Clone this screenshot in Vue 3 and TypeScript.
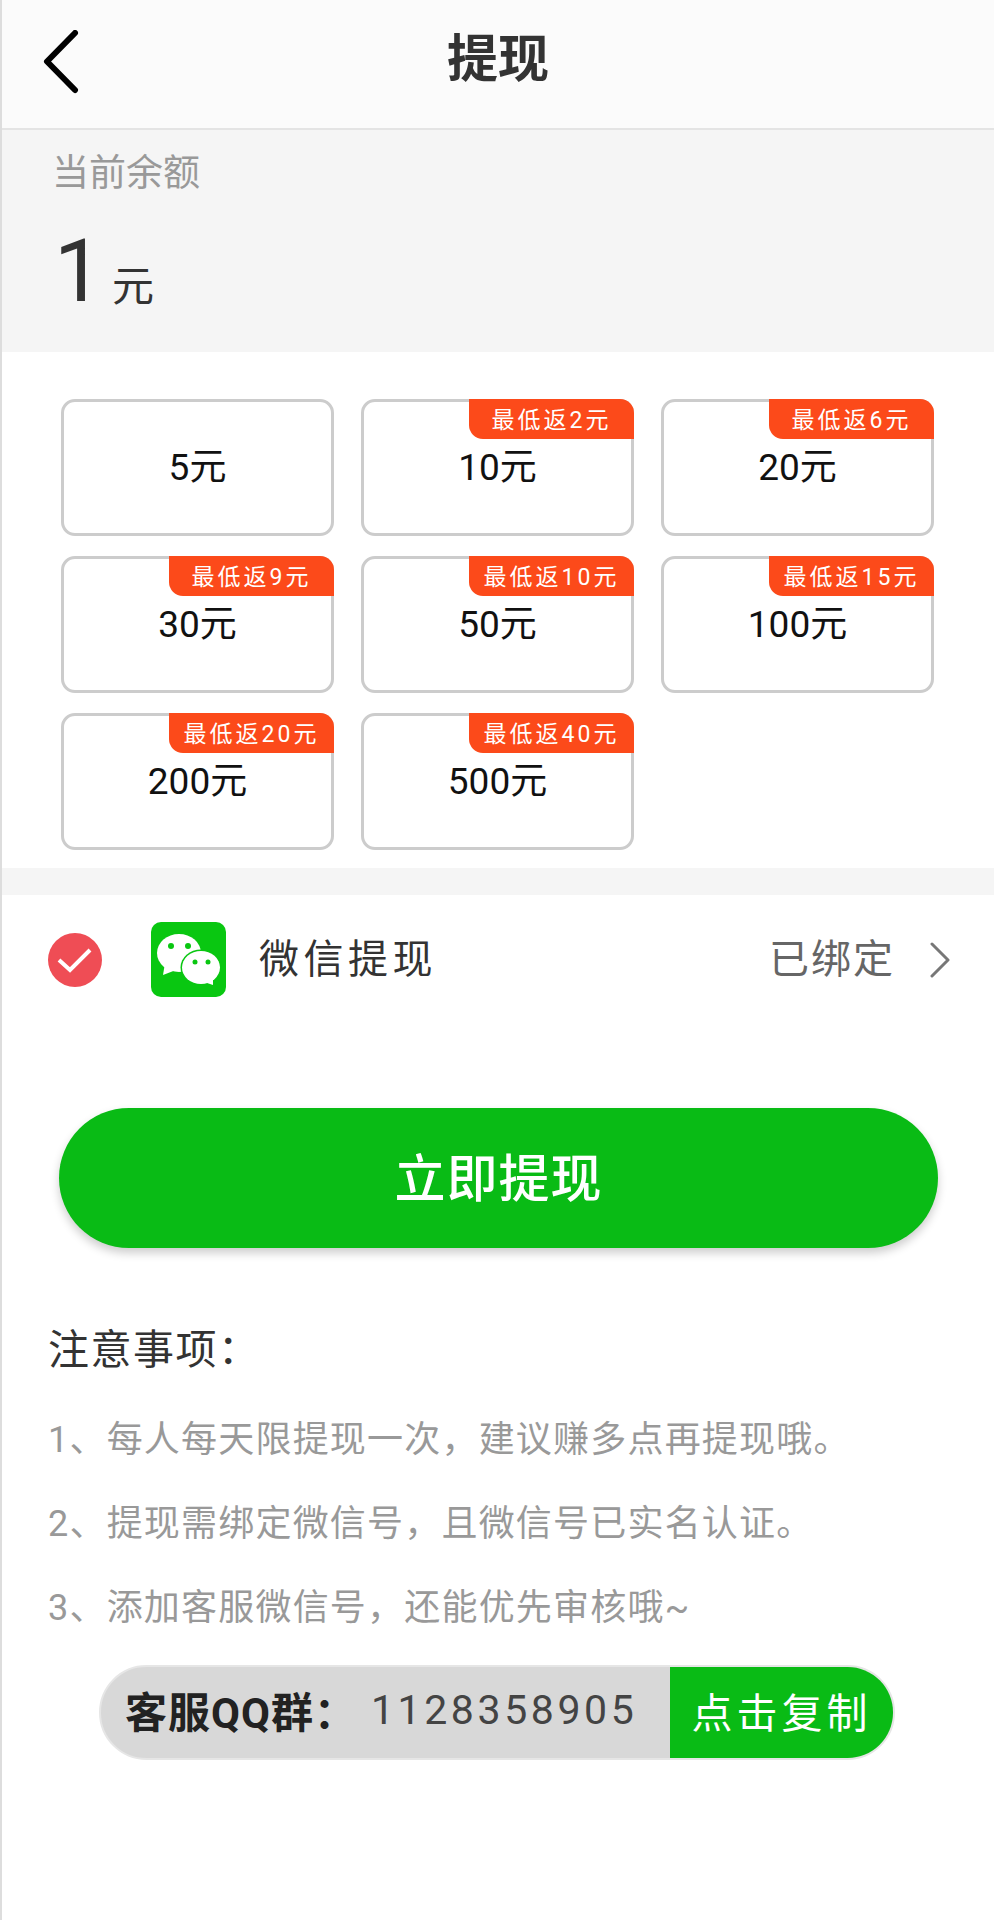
<template>
  <div class="page">
    <header class="top-bar">
      <svg class="back" width="36" height="64" viewBox="0 0 36 64">
        <path d="M32 3 L4 31.5 L32 60" fill="none" stroke="#000" stroke-width="6" stroke-linecap="round" stroke-linejoin="round" />
      </svg>
      <h1 class="title">提现</h1>
    </header>

    <section class="balance">
      <div class="balance-label">当前余额</div>
      <div class="balance-value"><span class="num">1</span><span class="unit">元</span></div>
    </section>

    <section class="amounts">
      <div v-for="item in amounts" :key="item.value" class="amount-card">
        <span v-if="item.tag" class="tag">{{ item.tag }}</span>
        <span class="amount-text">{{ item.value }}元</span>
      </div>
    </section>

    <div class="divider"></div>

    <section class="pay-row">
      <svg class="check" width="54" height="54" viewBox="0 0 54 54">
        <circle cx="27" cy="27" r="27" fill="#ef4d55" />
        <path d="M11 27 L22 37 L42 17" fill="none" stroke="#fff" stroke-width="4" stroke-linejoin="miter" />
      </svg>
      <svg class="wechat" width="75" height="75" viewBox="0 0 75 75">
        <rect width="75" height="75" rx="10" fill="#09c711" />
        <path d="M12 53 L13.500 44 L25 48 Z" fill="#fff" />
        <ellipse cx="28" cy="31" rx="22" ry="19" fill="#fff" />
        <circle cx="20" cy="24" r="3" fill="#09c711" />
        <circle cx="37" cy="24" r="3" fill="#09c711" />
        <ellipse cx="50" cy="45.500" rx="20.500" ry="18" fill="#09c711" />
        <path d="M62 63 L62 55 L53 60 Z" fill="#fff" />
        <ellipse cx="50" cy="45.500" rx="19" ry="16.500" fill="#fff" />
        <circle cx="44" cy="40" r="2.500" fill="#09c711" />
        <circle cx="57" cy="40" r="2.500" fill="#09c711" />
      </svg>
      <span class="pay-name">微信提现</span>
      <span class="pay-state">已绑定</span>
      <svg class="chevron" width="22" height="36" viewBox="0 0 22 36">
        <path d="M3 2 L19 18 L3 34" fill="none" stroke="#777" stroke-width="3" stroke-linecap="round" stroke-linejoin="round" />
      </svg>
    </section>

    <button class="submit">立即提现</button>

    <section class="notes">
      <h2 class="notes-title">注意事项&#xFF1A;</h2>
      <p v-for="line in notes" :key="line" class="note">{{ line }}</p>
    </section>

    <div class="qq-bar">
      <div class="qq-info">
        <span class="qq-label">客服QQ群&#xFF1A;</span>
        <span class="qq-number">1128358905</span>
      </div>
      <div class="qq-copy">点击复制</div>
    </div>
  </div>
</template>

<script setup lang="ts">
interface Amount {
  value: number
  tag?: string
}

const amounts: Amount[] = [
  { value: 5 },
  { value: 10, tag: '最低返2元' },
  { value: 20, tag: '最低返6元' },
  { value: 30, tag: '最低返9元' },
  { value: 50, tag: '最低返10元' },
  { value: 100, tag: '最低返15元' },
  { value: 200, tag: '最低返20元' },
  { value: 500, tag: '最低返40元' }
]

const notes = [
  '1、每人每天限提现一次\uFF0C建议赚多点再提现哦。',
  '2、提现需绑定微信号\uFF0C且微信号已实名认证。',
  '3、添加客服微信号\uFF0C还能优先审核哦~'
]
</script>

<style>
html,
body {
  margin: 0;
  background: #fff;
}
</style>

<style scoped>
.page {
  box-sizing: border-box;
  width: 994px;
  height: 1920px;
  overflow: hidden;
  border-left: 2px solid #ddd;
  font-family: Roboto, "Noto Sans CJK SC", sans-serif;
  background: #fff;
}

.top-bar {
  box-sizing: border-box;
  height: 130px;
  display: flex;
  align-items: center;
  justify-content: center;
  position: relative;
  padding-bottom: 8px;
  background: #fbfbfb;
  border-bottom: 2px solid #e4e4e4;
}

.back {
  position: absolute;
  left: 41px;
  top: 30px;
}

.title {
  margin: 0;
  font-size: 51px;
  font-weight: 700;
  color: #333;
  line-height: 118px;
}

.balance {
  box-sizing: border-box;
  height: 222px;
  padding: 21px 0 0 50px;
  background: #f5f5f5;
}

.balance-label {
  font-size: 37px;
  line-height: 46px;
  color: #999;
}

.balance-value {
  display: flex;
  align-items: baseline;
  margin-top: 24px;
  color: #333;
}

.num {
  font-size: 87px;
  line-height: 100px;
  margin-left: 2px;
}

.unit {
  font-size: 42px;
  margin-left: 9px;
}

.amounts {
  display: grid;
  grid-template-columns: repeat(3, 273px);
  grid-auto-rows: 137px;
  column-gap: 27px;
  row-gap: 20px;
  padding: 47px 0 18px 59px;
}

.amount-card {
  box-sizing: border-box;
  position: relative;
  display: flex;
  align-items: center;
  justify-content: center;
  padding-bottom: 8px;
  border: 3px solid #ccc;
  border-radius: 14px;
  background: #fff;
}

.amount-text {
  font-size: 37px;
  color: #111;
}

.tag {
  position: absolute;
  top: -3px;
  right: -3px;
  width: 165px;
  height: 40px;
  display: flex;
  align-items: center;
  justify-content: center;
  padding-bottom: 2px;
  box-sizing: border-box;
  border-radius: 0 14px 0 14px;
  background: #fc4a1a;
  color: #fff;
  font-size: 23px;
  letter-spacing: 3px;
}

.divider {
  height: 27px;
  background: #f5f5f5;
}

.pay-row {
  display: flex;
  align-items: center;
  height: 129px;
  padding: 0 43px 0 46px;
}

.wechat {
  margin-left: 49px;
}

.pay-name {
  margin: 0 0 8px 33px;
  font-size: 40px;
  letter-spacing: 4.500px;
  color: #333;
}

.pay-state {
  margin: 0 0 8px auto;
  font-size: 40px;
  letter-spacing: 2px;
  color: #666;
}

.chevron {
  margin-left: 34px;
}

.submit {
  display: block;
  width: 879px;
  height: 140px;
  margin: 84px 0 0 57px;
  padding: 0 0 6px;
  border: none;
  border-radius: 70px;
  background: #09bb15;
  box-shadow: 0 5px 10px rgba(0, 0, 0, 0.2);
  color: #fff;
  font-family: inherit;
  font-size: 51px;
  font-weight: 500;
  letter-spacing: 1px;
}

.notes {
  padding: 74px 0 0 46px;
}

.notes-title {
  margin: 0;
  font-size: 41px;
  font-weight: 400;
  line-height: 56px;
  letter-spacing: 1.500px;
  color: #333;
}

.note {
  margin: 0;
  font-size: 36px;
  line-height: 84px;
  letter-spacing: 1.200px;
  color: #999;
}

.note:first-of-type {
  margin-top: 20px;
}

.qq-bar {
  box-sizing: border-box;
  display: flex;
  width: 796px;
  height: 95px;
  margin: 15px 0 0 97px;
  border-radius: 48px;
  overflow: hidden;
  background: #d8d8d8;
  border: 2px solid #e6e6e6;
}

.qq-info {
  flex: 1;
  display: flex;
  align-items: center;
  padding: 0 0 6px 24px;
}

.qq-label {
  font-size: 42px;
  font-weight: 700;
  letter-spacing: 1px;
  color: #222;
}

.qq-number {
  margin-left: 14px;
  font-size: 41px;
  letter-spacing: 3.600px;
  color: #444;
}

.qq-copy {
  width: 223px;
  display: flex;
  align-items: center;
  justify-content: center;
  padding-bottom: 6px;
  background: #09bb15;
  color: #fff;
  font-size: 41px;
  letter-spacing: 4px;
}
</style>
